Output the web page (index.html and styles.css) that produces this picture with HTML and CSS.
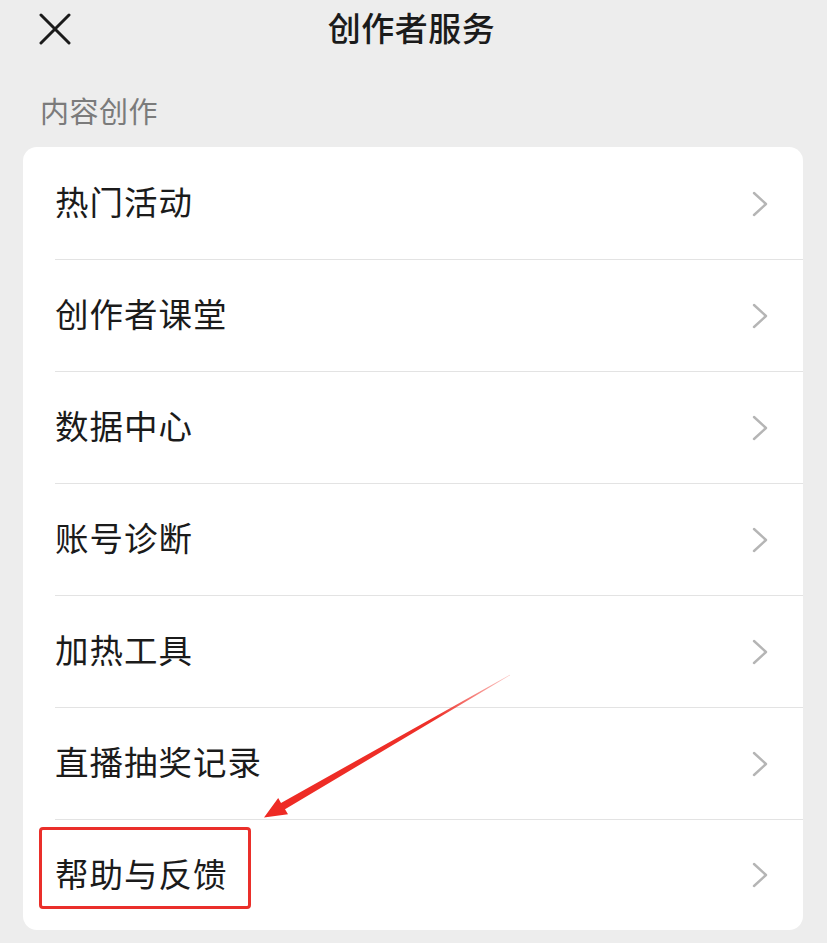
FILE: index.html
```html
<!DOCTYPE html>
<html lang="zh">
<head>
<meta charset="utf-8">
<title>创作者服务</title>
<link rel="stylesheet" href="styles.css">
</head>
<body>
<div class="page">
  <header class="topbar">
    <div class="close">
      <svg width="32" height="32" viewBox="0 0 32 32"><path d="M2 2 L30 30 M30 2 L2 30" stroke="#1b1b1b" stroke-width="3" stroke-linecap="round" fill="none"/></svg>
    </div>
    <h1 class="title">创作者服务</h1>
    <div></div>
  </header>
  <div class="section-label">内容创作</div>
  <ul class="card">
    <li class="row"><span class="label">热门活动</span><svg class="chev" width="16" height="26" viewBox="0 0 16 26"><path d="M2 2 L14 13 L2 24" stroke="#b5b5b5" stroke-width="2.4" fill="none" stroke-linecap="round" stroke-linejoin="round"/></svg></li>
    <li class="row"><span class="label">创作者课堂</span><svg class="chev" width="16" height="26" viewBox="0 0 16 26"><path d="M2 2 L14 13 L2 24" stroke="#b5b5b5" stroke-width="2.4" fill="none" stroke-linecap="round" stroke-linejoin="round"/></svg></li>
    <li class="row"><span class="label">数据中心</span><svg class="chev" width="16" height="26" viewBox="0 0 16 26"><path d="M2 2 L14 13 L2 24" stroke="#b5b5b5" stroke-width="2.4" fill="none" stroke-linecap="round" stroke-linejoin="round"/></svg></li>
    <li class="row"><span class="label">账号诊断</span><svg class="chev" width="16" height="26" viewBox="0 0 16 26"><path d="M2 2 L14 13 L2 24" stroke="#b5b5b5" stroke-width="2.4" fill="none" stroke-linecap="round" stroke-linejoin="round"/></svg></li>
    <li class="row"><span class="label">加热工具</span><svg class="chev" width="16" height="26" viewBox="0 0 16 26"><path d="M2 2 L14 13 L2 24" stroke="#b5b5b5" stroke-width="2.4" fill="none" stroke-linecap="round" stroke-linejoin="round"/></svg></li>
    <li class="row"><span class="label">直播抽奖记录</span><svg class="chev" width="16" height="26" viewBox="0 0 16 26"><path d="M2 2 L14 13 L2 24" stroke="#b5b5b5" stroke-width="2.4" fill="none" stroke-linecap="round" stroke-linejoin="round"/></svg></li>
    <li class="row last"><span class="label">帮助与反馈</span><svg class="chev" width="16" height="26" viewBox="0 0 16 26"><path d="M2 2 L14 13 L2 24" stroke="#b5b5b5" stroke-width="2.4" fill="none" stroke-linecap="round" stroke-linejoin="round"/></svg><span class="highlight"></span></li>
  </ul>
  <svg class="arrow" width="827" height="943" viewBox="0 0 827 943">
    <defs>
      <linearGradient id="ag" x1="510" y1="675" x2="264" y2="817" gradientUnits="userSpaceOnUse">
        <stop offset="0" stop-color="#f2453d" stop-opacity="0.3"/>
        <stop offset="0.3" stop-color="#ee3029"/>
        <stop offset="1" stop-color="#ee2a24"/>
      </linearGradient>
    </defs>
    <polygon fill="url(#ag)" points="510.15,675.26 285,809.2 288,814.2 264,817.5 278.2,798 281,802.9 509.85,674.74"/>
  </svg>
</div>
</body>
</html>
```
FILE: styles.css
```css
* { box-sizing: border-box; }
html, body {
  margin: 0;
  padding: 0;
  background: #ededed;
}
body {
  font-family: "Noto Sans CJK SC", "Noto Sans", sans-serif;
  color: #1b1b1b;
}
.page {
  position: relative;
  width: 827px;
  height: 943px;
  overflow: hidden;
}
.topbar {
  display: grid;
  grid-template-columns: 1fr auto 1fr;
  align-items: center;
  height: 55px;
}
.close {
  display: flex;
  align-items: center;
  padding-left: 39px;
  padding-top: 2px;
}
.close svg { display: block; }
.title {
  margin: 0;
  font-size: 33px;
  font-weight: 500;
  line-height: 55px;
  letter-spacing: 0.5px;
  color: #1b1b1b;
  transform: translateX(-2px);
}
.section-label {
  padding-left: 40px;
  margin-top: 36px;
  font-size: 29px;
  line-height: 38px;
  color: #7b7b7b;
  letter-spacing: 0.5px;
}
.card {
  list-style: none;
  margin: 18px 24px 0 23px;
  padding: 1px 0 0;
  background: #ffffff;
  border-radius: 14px;
}
.row {
  position: relative;
  display: flex;
  align-items: center;
  justify-content: space-between;
  height: 112px;
  margin-left: 32px;
  padding-right: 35px;
  border-bottom: 1px solid #e3e3e3;
}
.row.last {
  border-bottom: none;
  height: 110px;
}
.label {
  font-size: 33.5px;
  line-height: 40px;
  letter-spacing: 1px;
  color: #1b1b1b;
  margin-bottom: 5px;
}
.chev { display: block; }
.highlight {
  position: absolute;
  left: -16px;
  top: 7px;
  width: 212px;
  height: 82px;
  border: 3px solid #ea2f2a;
  border-radius: 4px;
}
.arrow {
  position: absolute;
  left: 0;
  top: 0;
  pointer-events: none;
}
```
